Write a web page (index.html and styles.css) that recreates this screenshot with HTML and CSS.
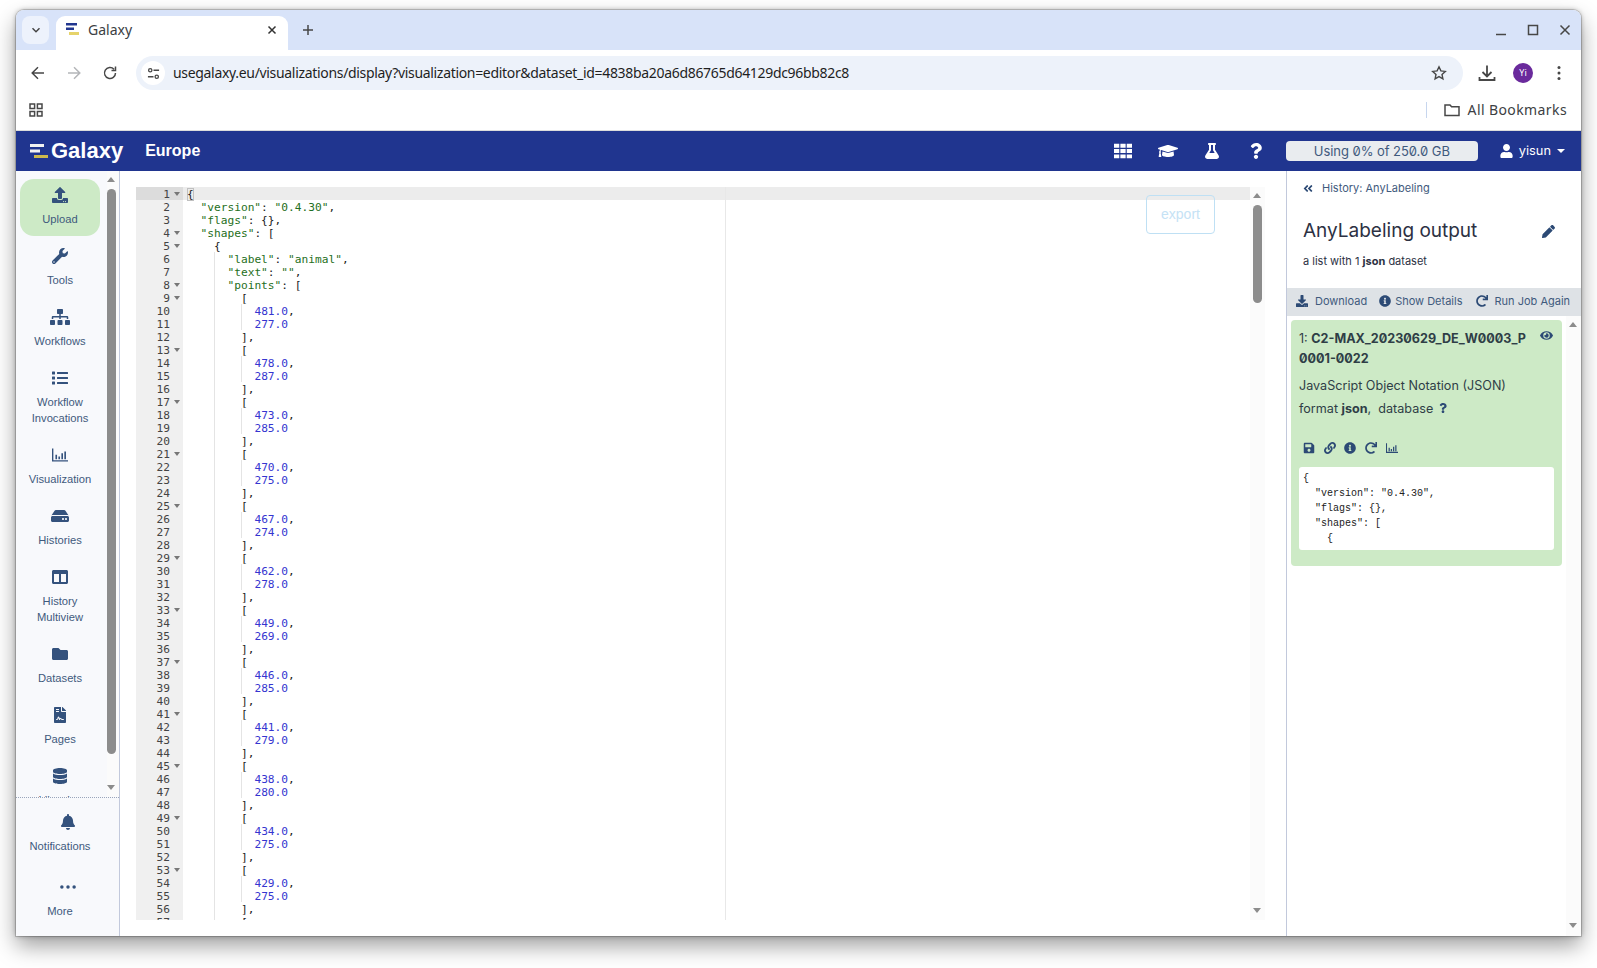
FILE: index.html
```html
<!DOCTYPE html>
<html lang="en">
<head>
<meta charset="utf-8">
<title>Galaxy</title>
<link rel="stylesheet" href="styles.css">
</head>
<body>
<svg class="defs" aria-hidden="true">
<symbol id="i-upload" viewBox="0 0 512 512"><path d="M296 384h-80c-13.3 0-24-10.7-24-24V192h-87.7c-17.8 0-26.7-21.5-14.1-34.1L242.3 5.7c7.5-7.5 19.8-7.5 27.3 0l152.2 152.2c12.6 12.6 3.7 34.1-14.1 34.1H320v168c0 13.3-10.7 24-24 24zm216-8v112c0 13.3-10.7 24-24 24H24c-13.3 0-24-10.7-24-24V376c0-13.3 10.7-24 24-24h136v8c0 30.9 25.1 56 56 56h80c30.9 0 56-25.1 56-56v-8h136c13.3 0 24 10.7 24 24zm-124 88c0-11-9-20-20-20s-20 9-20 20 9 20 20 20 20-9 20-20zm64 0c0-11-9-20-20-20s-20 9-20 20 9 20 20 20 20-9 20-20z"/></symbol>
<symbol id="i-download" viewBox="0 0 512 512"><path d="M216 0h80c13.3 0 24 10.7 24 24v168h87.7c17.8 0 26.7 21.5 14.1 34.1L269.700 378.300c-7.500 7.500-19.800 7.500-27.300 0L90.100 226.100c-12.600-12.600-3.700-34.100 14.100-34.100H192V24c0-13.300 10.700-24 24-24zm296 376v112c0 13.300-10.700 24-24 24H24c-13.300 0-24-10.700-24-24V376c0-13.300 10.700-24 24-24h146.700l49 49c20.100 20.100 52.500 20.100 72.600 0l49-49H488c13.300 0 24 10.700 24 24zm-124 88c0-11-9-20-20-20s-20 9-20 20 9 20 20 20 20-9 20-20zm64 0c0-11-9-20-20-20s-20 9-20 20 9 20 20 20 20-9 20-20z"/></symbol>
<symbol id="i-wrench" viewBox="0 0 512 512"><path d="M507.73 109.1c-2.24-9.03-13.54-12.09-20.12-5.51l-74.36 74.36-67.88-11.31-11.31-67.88 74.36-74.36c6.62-6.62 3.43-17.9-5.66-20.16-47.38-11.74-99.55.91-136.58 37.93-39.64 39.64-50.55 97.1-34.05 147.2L18.74 402.76c-24.99 24.99-24.99 65.51 0 90.5 24.99 24.99 65.51 24.99 90.5 0l213.21-213.21c50.12 16.71 107.47 5.68 147.37-34.22 37.07-37.07 49.7-89.32 37.91-136.73zM64 472c-13.25 0-24-10.75-24-24 0-13.26 10.75-24 24-24s24 10.74 24 24c0 13.25-10.75 24-24 24z"/></symbol>
<symbol id="i-sitemap" viewBox="0 0 640 512"><path d="M128 352H32c-17.67 0-32 14.33-32 32v96c0 17.67 14.33 32 32 32h96c17.67 0 32-14.33 32-32v-96c0-17.67-14.33-32-32-32zm-24-80h192v48h48v-48h192v48h48v-57.59c0-21.17-17.23-38.41-38.41-38.41H344v-64h40c17.67 0 32-14.33 32-32V32c0-17.67-14.33-32-32-32H256c-17.67 0-32 14.33-32 32v96c0 17.67 14.33 32 32 32h40v64H94.41C73.23 224 56 241.23 56 262.41V320h48v-48zm264 80h-96c-17.67 0-32 14.33-32 32v96c0 17.67 14.33 32 32 32h96c17.67 0 32-14.33 32-32v-96c0-17.67-14.33-32-32-32zm240 0h-96c-17.67 0-32 14.33-32 32v96c0 17.67 14.33 32 32 32h96c17.67 0 32-14.33 32-32v-96c0-17.67-14.33-32-32-32z"/></symbol>
<symbol id="i-list" viewBox="0 0 512 512"><path d="M80 368H16a16 16 0 0 0-16 16v64a16 16 0 0 0 16 16h64a16 16 0 0 0 16-16v-64a16 16 0 0 0-16-16zm0-320H16A16 16 0 0 0 0 64v64a16 16 0 0 0 16 16h64a16 16 0 0 0 16-16V64a16 16 0 0 0-16-16zm0 160H16a16 16 0 0 0-16 16v64a16 16 0 0 0 16 16h64a16 16 0 0 0 16-16v-64a16 16 0 0 0-16-16zm416 176H176a16 16 0 0 0-16 16v32a16 16 0 0 0 16 16h320a16 16 0 0 0 16-16v-32a16 16 0 0 0-16-16zm0-320H176a16 16 0 0 0-16 16v32a16 16 0 0 0 16 16h320a16 16 0 0 0 16-16V80a16 16 0 0 0-16-16zm0 160H176a16 16 0 0 0-16 16v32a16 16 0 0 0 16 16h320a16 16 0 0 0 16-16v-32a16 16 0 0 0-16-16z"/></symbol>
<symbol id="i-chart" viewBox="0 0 512 512"><path d="M0 48h44v372h468v44H0zM110 250h52v140h-52zM205 300h52v90h-52zM300 200h52v190h-52zM395 140h52v250h-52z"/></symbol>
<symbol id="i-hdd" viewBox="0 0 576 512"><path d="M576 304v96c0 26.51-21.49 48-48 48H48c-26.51 0-48-21.49-48-48v-96c0-26.51 21.49-48 48-48h480c26.51 0 48 21.49 48 48zm-48-80a79.557 79.557 0 0 1 30.777 6.165L462.25 85.374A48.003 48.003 0 0 0 422.311 64H153.689a48 48 0 0 0-39.938 21.374L17.223 230.165A79.557 79.557 0 0 1 48 224h480zm-48 96c-17.673 0-32 14.327-32 32s14.327 32 32 32 32-14.327 32-32-14.327-32-32-32zm-96 0c-17.673 0-32 14.327-32 32s14.327 32 32 32 32-14.327 32-32-14.327-32-32-32z"/></symbol>
<symbol id="i-columns" viewBox="0 0 512 512"><path d="M464 32H48C21.49 32 0 53.49 0 80v352c0 26.51 21.49 48 48 48h416c26.51 0 48-21.49 48-48V80c0-26.51-21.49-48-48-48zM224 416H64V160h160v256zm224 0H288V160h160v256z"/></symbol>
<symbol id="i-folder" viewBox="0 0 512 512"><path d="M464 128H272l-64-64H48C21.49 64 0 85.49 0 112v288c0 26.51 21.49 48 48 48h416c26.51 0 48-21.49 48-48V176c0-26.51-21.49-48-48-48z"/></symbol>
<symbol id="i-file" viewBox="0 0 384 512"><path d="M224 136V0H24C10.7 0 0 10.7 0 24v464c0 13.3 10.7 24 24 24h336c13.3 0 24-10.7 24-24V160H248c-13.2 0-24-10.8-24-24zM64 72c0-4.42 3.58-8 8-8h80c4.42 0 8 3.58 8 8v16c0 4.42-3.58 8-8 8H72c-4.42 0-8-3.58-8-8V72zm0 64c0-4.42 3.58-8 8-8h80c4.42 0 8 3.58 8 8v16c0 4.42-3.58 8-8 8H72c-4.42 0-8-3.58-8-8v-16zm192.81 248H304c8.84 0 16 7.16 16 16s-7.16 16-16 16h-47.19c-16.45 0-31.27-9.14-38.64-23.86-2.95-5.92-8.09-6.52-10.17-6.52s-7.22.59-10.02 6.19l-7.67 15.34a15.986 15.986 0 0 1-14.31 8.84c-.38 0-.75-.02-1.14-.05-6.45-.45-12-4.75-14.03-10.89L144 354.59l-10.61 31.88c-5.89 17.66-22.38 29.53-41 29.53H80c-8.84 0-16-7.16-16-16s7.16-16 16-16h12.39c4.83 0 9.11-3.08 10.64-7.66l18.19-54.64c3.3-9.81 12.44-16.41 22.78-16.41s19.48 6.59 22.77 16.41l13.88 41.64c19.77-16.19 54.05-9.7 66 14.16 2.02 4.06 5.96 6.5 10.16 6.5zM377 105L279.1 7c-4.5-4.5-10.6-7-17-7H256v128h128v-6.1c0-6.3-2.5-12.4-7-16.9z"/></symbol>
<symbol id="i-db" viewBox="0 0 448 512"><path d="M448 73.143v45.714C448 159.143 347.667 192 224 192S0 159.143 0 118.857V73.143C0 32.857 100.333 0 224 0s224 32.857 224 73.143zM448 176v102.857C448 319.143 347.667 352 224 352S0 319.143 0 278.857V176c48.125 33.143 136.208 48.572 224 48.572S399.874 209.143 448 176zm0 160v102.857C448 479.143 347.667 512 224 512S0 479.143 0 438.857V336c48.125 33.143 136.208 48.572 224 48.572S399.874 369.143 448 336z"/></symbol>
<symbol id="i-bell" viewBox="0 0 448 512"><path d="M224 512c35.32 0 63.97-28.65 63.97-64H160.03c0 35.35 28.65 64 63.97 64zm215.39-149.71c-19.32-20.76-55.47-51.99-55.47-154.29 0-77.7-54.48-139.9-127.94-155.16V32c0-17.67-14.32-32-31.98-32s-31.98 14.33-31.98 32v20.84C118.56 68.1 64.08 130.3 64.08 208c0 102.3-36.15 133.53-55.47 154.29-6 6.45-8.66 14.16-8.61 21.71.11 16.4 12.98 32 32.1 32h383.8c19.12 0 32-15.6 32.1-32 .05-7.55-2.61-15.27-8.61-21.71z"/></symbol>
<symbol id="i-dots" viewBox="0 0 512 512"><circle cx="60" cy="256" r="56"/><circle cx="256" cy="256" r="56"/><circle cx="452" cy="256" r="56"/></symbol>
<symbol id="i-grid" viewBox="0 48 512 416"><path d="M0 48h150v112H0zM181 48h150v112H181zM362 48h150v112H362zM0 200h150v112H0zM181 200h150v112H181zM362 200h150v112H362zM0 352h150v112H0zM181 352h150v112H181zM362 352h150v112H362z"/></symbol>
<symbol id="i-cap" viewBox="0 0 640 512"><path d="M622.34 153.2L343.4 67.5c-15.2-4.67-31.6-4.67-46.79 0L17.66 153.2c-23.54 7.23-23.54 38.36 0 45.59l48.63 14.94c-10.67 13.19-17.23 29.28-17.88 46.9C38.78 266.15 32 276.11 32 288c0 10.78 5.68 19.85 13.86 25.65L20.33 428.53C18.11 438.52 25.71 448 35.94 448h56.11c10.24 0 17.84-9.48 15.62-19.47L82.14 313.65C90.32 307.85 96 298.78 96 288c0-11.57-6.47-21.25-15.66-26.87.76-15.02 8.44-28.3 20.69-36.72L296.6 284.5c9.06 2.78 26.44 6.25 46.79 0l278.95-85.7c23.55-7.24 23.55-38.36 0-45.6zM352.79 315.09c-28.53 8.76-52.84 3.92-65.59 0l-145.02-44.55L128 384c0 35.35 85.96 64 192 64s192-28.65 192-64l-14.18-113.47-145.03 44.56z"/></symbol>
<symbol id="i-flask" viewBox="0 0 448 512"><path d="M437.2 403.5L320 215V64h8c13.3 0 24-10.7 24-24V24c0-13.3-10.7-24-24-24H120c-13.3 0-24 10.7-24 24v16c0 13.3 10.7 24 24 24h8v151L10.8 403.5C-18.5 450.6 15.3 512 70.9 512h306.2c55.7 0 89.4-61.5 60.1-108.5zM137.9 320l48.2-77.6c3.7-5.2 5.8-11.6 5.8-18.4V64h64v160c0 6.9 2.2 13.2 5.8 18.4l48.2 77.6h-172z"/></symbol>
<symbol id="i-q" viewBox="0 0 384 512"><path d="M202.021 0C122.202 0 70.503 32.703 29.914 91.026c-7.363 10.58-5.093 25.086 5.178 32.874l43.138 32.709c10.373 7.865 25.132 6.026 33.253-4.148 25.049-31.381 43.63-49.449 82.757-49.449 30.764 0 68.816 19.799 68.816 49.631 0 22.552-18.617 34.134-48.993 51.164-35.423 19.86-82.299 44.576-82.299 106.405V320c0 13.255 10.745 24 24 24h72.471c13.255 0 24-10.745 24-24v-5.773c0-42.86 125.268-44.645 125.268-160.627C377.504 66.256 286.902 0 202.021 0zM192 373.459c-38.196 0-69.271 31.075-69.271 69.271 0 38.195 31.075 69.27 69.271 69.27s69.271-31.075 69.271-69.271-31.075-69.27-69.271-69.27z"/></symbol>
<symbol id="i-user" viewBox="0 0 448 512"><path d="M224 256c70.7 0 128-57.3 128-128S294.7 0 224 0 96 57.3 96 128s57.3 128 128 128zm89.6 32h-16.7c-22.2 10.2-46.9 16-72.9 16s-50.6-5.8-72.9-16h-16.7C60.2 288 0 348.2 0 422.4V464c0 26.5 21.5 48 48 48h352c26.5 0 48-21.5 48-48v-41.6c0-74.2-60.2-134.4-134.4-134.4z"/></symbol>
<symbol id="i-pencil" viewBox="0 0 512 512"><path d="M497.9 142.1l-46.1 46.1c-4.7 4.7-12.3 4.7-17 0l-111-111c-4.7-4.7-4.7-12.3 0-17l46.1-46.1c18.7-18.7 49.1-18.7 67.9 0l60.1 60.1c18.8 18.7 18.8 49.1 0 67.9zM284.2 99.8L21.6 362.4.4 483.9c-2.9 16.4 11.4 30.6 27.8 27.8l121.5-21.3 262.6-262.6c4.7-4.7 4.7-12.3 0-17l-111-111c-4.8-4.7-12.4-4.7-17.1 0z"/></symbol>
<symbol id="i-back" viewBox="0 0 448 512"><path d="M223.7 239l136-136c9.4-9.4 24.6-9.4 33.9 0l22.6 22.6c9.4 9.4 9.4 24.6 0 33.9L319.9 256l96.4 96.4c9.4 9.4 9.4 24.6 0 33.9L393.7 409c-9.4 9.4-24.6 9.4-33.9 0l-136-136c-9.5-9.4-9.5-24.6-.1-34zm-192 34l136 136c9.4 9.4 24.6 9.4 33.9 0l22.6-22.6c9.4-9.4 9.4-24.6 0-33.9L127.9 256l96.4-96.4c9.4-9.4 9.4-24.6 0-33.9L201.7 103c-9.4-9.4-24.6-9.4-33.9 0l-136 136c-9.5 9.4-9.5 24.6-.1 34z"/></symbol>
<symbol id="i-info" viewBox="0 0 512 512"><path d="M256 8C119.043 8 8 119.083 8 256c0 136.997 111.043 248 248 248s248-111.003 248-248C504 119.083 392.957 8 256 8zm0 110c23.196 0 42 18.804 42 42s-18.804 42-42 42-42-18.804-42-42 18.804-42 42-42zm56 254c0 6.627-5.373 12-12 12h-88c-6.627 0-12-5.373-12-12v-24c0-6.627 5.373-12 12-12h12v-64h-12c-6.627 0-12-5.373-12-12v-24c0-6.627 5.373-12 12-12h64c6.627 0 12 5.373 12 12v100h12c6.627 0 12 5.373 12 12v24z"/></symbol>
<symbol id="i-redo" viewBox="0 0 512 512"><path d="M500.33 0h-47.41a12 12 0 0 0-12 12.57l4 82.76A247.42 247.42 0 0 0 256 8C119.34 8 7.9 119.53 8 256.19 8.1 393.07 119.1 504 256 504a247.1 247.1 0 0 0 166.18-63.91 12 12 0 0 0 .48-17.43l-34-34a12 12 0 0 0-16.38-.55A176 176 0 1 1 402.1 157.8l-101.53-4.87a12 12 0 0 0-12.57 12v47.41a12 12 0 0 0 12 12h200.33a12 12 0 0 0 12-12V12a12 12 0 0 0-12-12z"/></symbol>
<symbol id="i-eye" viewBox="0 0 576 512"><path d="M572.52 241.4C518.29 135.59 410.93 64 288 64S57.68 135.64 3.48 241.41a32.35 32.35 0 0 0 0 29.19C57.71 376.41 165.07 448 288 448s230.32-71.64 284.52-177.41a32.35 32.35 0 0 0 0-29.19zM288 400a144 144 0 1 1 144-144 143.93 143.93 0 0 1-144 144zm0-240a95.31 95.31 0 0 0-25.31 3.79 47.85 47.85 0 0 1-66.9 66.9A95.78 95.78 0 1 0 288 160z"/></symbol>
<symbol id="i-save" viewBox="0 0 448 512"><path d="M433.941 129.941l-83.882-83.882A48 48 0 0 0 316.118 32H48C21.49 32 0 53.49 0 80v352c0 26.51 21.49 48 48 48h352c26.51 0 48-21.49 48-48V163.882a48 48 0 0 0-14.059-33.941zM224 416c-35.346 0-64-28.654-64-64 0-35.346 28.654-64 64-64s64 28.654 64 64c0 35.346-28.654 64-64 64zm96-304.52V212c0 6.627-5.373 12-12 12H76c-6.627 0-12-5.373-12-12V108c0-6.627 5.373-12 12-12h228.52c3.183 0 6.235 1.264 8.485 3.515l3.48 3.48A11.996 11.996 0 0 1 320 111.48z"/></symbol>
<symbol id="i-link" viewBox="0 0 512 512"><path d="M326.612 185.391c59.747 59.809 58.927 155.698.36 214.59-.11.12-.24.25-.36.37l-67.2 67.2c-59.27 59.27-155.699 59.262-214.96 0-59.27-59.26-59.27-155.7 0-214.96l37.106-37.106c9.84-9.84 26.786-3.3 27.294 10.606.648 17.722 3.826 35.527 9.69 52.721 1.986 5.822.567 12.262-3.783 16.612l-13.087 13.087c-28.026 28.026-28.905 73.66-1.155 101.96 28.024 28.579 74.086 28.749 102.325.51l67.2-67.19c28.191-28.191 28.073-73.757 0-101.83-3.701-3.694-7.429-6.564-10.341-8.569a16.037 16.037 0 0 1-6.947-12.606c-.396-10.567 3.348-21.456 11.698-29.806l21.054-21.055c5.521-5.521 14.182-6.199 20.584-1.731a152.482 152.482 0 0 1 20.522 17.197zM467.547 44.449c-59.261-59.262-155.69-59.27-214.96 0l-67.2 67.2c-.12.12-.25.25-.36.37-58.566 58.892-59.387 154.781.36 214.59a152.454 152.454 0 0 0 20.521 17.196c6.402 4.468 15.064 3.789 20.584-1.731l21.054-21.055c8.35-8.35 12.094-19.239 11.698-29.806a16.037 16.037 0 0 0-6.947-12.606c-2.912-2.005-6.64-4.875-10.341-8.569-28.073-28.073-28.191-73.639 0-101.83l67.2-67.19c28.239-28.239 74.3-28.069 102.325.51 27.75 28.3 26.872 73.934-1.155 101.96l-13.087 13.087c-4.35 4.35-5.769 10.79-3.783 16.612 5.864 17.194 9.042 34.999 9.69 52.721.509 13.906 17.454 20.446 27.294 10.606l37.106-37.106c59.271-59.259 59.271-155.699.001-214.959z"/></symbol>
<symbol id="i-logo" viewBox="0 0 18 16"><path class="l1" d="M0 1h14v3H0zM0 6.500h10v3H0z"/><path class="l2" d="M4 12h14v3H4z"/></symbol>
</svg>

<div class="window">
  <div class="tabstrip">
    <div class="tabsearch"><svg class="c-ic s10" viewBox="0 0 10 10"><path d="M1.500 3.200 5 6.700l3.500-3.500"/></svg></div>
    <div class="tab">
      <svg class="tab-logo" viewBox="0 0 16 16"><path fill="#21368f" d="M1 1h11v2.400H1zM1 5.500h8v2.400H1z"/><path fill="#e6d36a" d="M4 10h10v3H4z"/></svg>
      <span class="tab-title">Galaxy</span>
      <svg class="c-ic s10 tab-x" viewBox="0 0 10 10"><path d="m1.500 1.500 7 7m0-7-7 7"/></svg>
    </div>
    <svg class="c-ic s12 newtab" viewBox="0 0 12 12"><path d="M6 1v10M1 6h10"/></svg>
    <div class="winctl">
      <svg class="c-ic s12" viewBox="0 0 12 12"><path d="M1 10.500h10"/></svg>
      <svg class="c-ic s12" viewBox="0 0 12 12"><path d="M1.500 1.500h9v9h-9z"/></svg>
      <svg class="c-ic s12" viewBox="0 0 12 12"><path d="m1.500 1.500 9 9m0-9-9 9"/></svg>
    </div>
  </div>
  <div class="toolbar">
    <svg class="c-ic s16 nav" viewBox="0 0 16 16"><path d="M14 8H2.500M8 2.200 2.200 8 8 13.800"/></svg>
    <svg class="c-ic s16 nav off" viewBox="0 0 16 16"><path d="M2 8h11.500M8 2.200 13.800 8 8 13.800"/></svg>
    <svg class="c-ic s16 nav" viewBox="0 0 16 16"><path d="M13.500 8A5.500 5.500 0 1 1 12 4.200M13.500 1.500v4h-4"/></svg>
    <div class="omnibox">
      <span class="siteinfo"><svg class="c-ic s14" viewBox="0 0 14 14"><circle cx="3.500" cy="3.500" r="1.800"/><circle cx="10.500" cy="10.500" r="1.800"/><path d="M7 3.500h6M1 10.500h6"/></svg></span>
      <span class="url">usegalaxy.eu/visualizations/display?visualization=editor&amp;dataset_id=4838ba20a6d86765d64129dc96bb82c8</span>
      <svg class="c-ic s16 star" viewBox="0 0 16 16"><path d="m8 1.800 1.900 4.100 4.400.5-3.300 3 .9 4.400L8 11.600l-3.900 2.200.9-4.400-3.300-3 4.400-.5z"/></svg>
    </div>
    <svg class="c-ic s18 dl" viewBox="0 0 18 18"><path d="M9 1.500v11M4.500 8 9 12.500 13.500 8M1.500 13v3h15v-3"/></svg>
    <span class="avatar">Yi</span>
    <svg class="kebab" viewBox="0 0 4 16"><circle cx="2" cy="2.500" r="1.500"/><circle cx="2" cy="8" r="1.500"/><circle cx="2" cy="13.500" r="1.500"/></svg>
  </div>
  <div class="bookmarks">
    <svg class="c-ic s14" viewBox="0 0 14 14"><path d="M1 1h4.600v4.600H1zM8.400 1H13v4.600H8.400zM1 8.400h4.600V13H1zM8.400 8.400H13V13H8.400z"/></svg>
    <span class="bm-sep"></span>
    <svg class="c-ic s16" viewBox="0 0 16 16"><path d="M1 3h5l1.600 1.800H15v8.700H1z"/></svg>
    <span class="bm-text">All Bookmarks</span>
  </div>

  <div class="navbar">
    <svg class="brand-logo"><use href="#i-logo"/></svg>
    <span class="brand">Galaxy</span>
    <span class="brand-sub">Europe</span>
    <div class="nav-right">
      <svg class="nav-ic"><use href="#i-grid"/></svg>
      <svg class="nav-ic cap"><use href="#i-cap"/></svg>
      <svg class="nav-ic"><use href="#i-flask"/></svg>
      <svg class="nav-ic"><use href="#i-q"/></svg>
      <span class="quota">Using 0% of 250.0 GB</span>
      <span class="usermenu"><svg class="user-ic"><use href="#i-user"/></svg>yisun<i class="caret"></i></span>
    </div>
  </div>

  <div class="app">
    <aside class="sidebar">
      <div class="side-top">
        <div class="side-list">
          <a class="item active"><svg class="ic"><use href="#i-upload"/></svg><span>Upload</span></a>
          <a class="item"><svg class="ic"><use href="#i-wrench"/></svg><span>Tools</span></a>
          <a class="item"><svg class="ic"><use href="#i-sitemap"/></svg><span>Workflows</span></a>
          <a class="item"><svg class="ic"><use href="#i-list"/></svg><span>Workflow Invocations</span></a>
          <a class="item"><svg class="ic"><use href="#i-chart"/></svg><span>Visualization</span></a>
          <a class="item"><svg class="ic"><use href="#i-hdd"/></svg><span>Histories</span></a>
          <a class="item"><svg class="ic"><use href="#i-columns"/></svg><span>History Multiview</span></a>
          <a class="item"><svg class="ic"><use href="#i-folder"/></svg><span>Datasets</span></a>
          <a class="item"><svg class="ic"><use href="#i-file"/></svg><span>Pages</span></a>
          <a class="item"><svg class="ic"><use href="#i-db"/></svg><span>Libraries</span></a>
        </div>
        <div class="vscroll side-scroll"><i class="up"></i><b class="thumb"></b><i class="down"></i></div>
      </div>
      <div class="side-bottom">
        <a class="item"><svg class="ic shifted"><use href="#i-bell"/></svg><span>Notifications</span></a>
        <a class="item more"><svg class="ic shifted"><use href="#i-dots"/></svg><span>More</span></a>
      </div>
    </aside>

    <main class="center">
      <button class="export">export</button>
      <div class="editor">
        <div class="code">
          <i class="margin"></i>
          <div class="r act"><b class="f">1</b><code><span class="cur">{</span></code></div>
          <div class="r"><b>2</b><code>  <s>"version"</s>: <s>"0.4.30"</s>,</code></div>
          <div class="r"><b>3</b><code>  <s>"flags"</s>: {},</code></div>
          <div class="r"><b class="f">4</b><code>  <s>"shapes"</s>: [</code></div>
          <div class="r"><b class="f">5</b><code>    {</code></div>
          <div class="r"><b>6</b><code>    <u>  </u><s>"label"</s>: <s>"animal"</s>,</code></div>
          <div class="r"><b>7</b><code>    <u>  </u><s>"text"</s>: <s>""</s>,</code></div>
          <div class="r"><b class="f">8</b><code>    <u>  </u><s>"points"</s>: [</code></div>
          <div class="r"><b class="f">9</b><code>    <u>    </u>[</code></div>
          <div class="r"><b>10</b><code>    <u>    </u><u>  </u><em>481.0</em>,</code></div>
          <div class="r"><b>11</b><code>    <u>    </u><u>  </u><em>277.0</em></code></div>
          <div class="r"><b>12</b><code>    <u>    </u>],</code></div>
          <div class="r"><b class="f">13</b><code>    <u>    </u>[</code></div>
          <div class="r"><b>14</b><code>    <u>    </u><u>  </u><em>478.0</em>,</code></div>
          <div class="r"><b>15</b><code>    <u>    </u><u>  </u><em>287.0</em></code></div>
          <div class="r"><b>16</b><code>    <u>    </u>],</code></div>
          <div class="r"><b class="f">17</b><code>    <u>    </u>[</code></div>
          <div class="r"><b>18</b><code>    <u>    </u><u>  </u><em>473.0</em>,</code></div>
          <div class="r"><b>19</b><code>    <u>    </u><u>  </u><em>285.0</em></code></div>
          <div class="r"><b>20</b><code>    <u>    </u>],</code></div>
          <div class="r"><b class="f">21</b><code>    <u>    </u>[</code></div>
          <div class="r"><b>22</b><code>    <u>    </u><u>  </u><em>470.0</em>,</code></div>
          <div class="r"><b>23</b><code>    <u>    </u><u>  </u><em>275.0</em></code></div>
          <div class="r"><b>24</b><code>    <u>    </u>],</code></div>
          <div class="r"><b class="f">25</b><code>    <u>    </u>[</code></div>
          <div class="r"><b>26</b><code>    <u>    </u><u>  </u><em>467.0</em>,</code></div>
          <div class="r"><b>27</b><code>    <u>    </u><u>  </u><em>274.0</em></code></div>
          <div class="r"><b>28</b><code>    <u>    </u>],</code></div>
          <div class="r"><b class="f">29</b><code>    <u>    </u>[</code></div>
          <div class="r"><b>30</b><code>    <u>    </u><u>  </u><em>462.0</em>,</code></div>
          <div class="r"><b>31</b><code>    <u>    </u><u>  </u><em>278.0</em></code></div>
          <div class="r"><b>32</b><code>    <u>    </u>],</code></div>
          <div class="r"><b class="f">33</b><code>    <u>    </u>[</code></div>
          <div class="r"><b>34</b><code>    <u>    </u><u>  </u><em>449.0</em>,</code></div>
          <div class="r"><b>35</b><code>    <u>    </u><u>  </u><em>269.0</em></code></div>
          <div class="r"><b>36</b><code>    <u>    </u>],</code></div>
          <div class="r"><b class="f">37</b><code>    <u>    </u>[</code></div>
          <div class="r"><b>38</b><code>    <u>    </u><u>  </u><em>446.0</em>,</code></div>
          <div class="r"><b>39</b><code>    <u>    </u><u>  </u><em>285.0</em></code></div>
          <div class="r"><b>40</b><code>    <u>    </u>],</code></div>
          <div class="r"><b class="f">41</b><code>    <u>    </u>[</code></div>
          <div class="r"><b>42</b><code>    <u>    </u><u>  </u><em>441.0</em>,</code></div>
          <div class="r"><b>43</b><code>    <u>    </u><u>  </u><em>279.0</em></code></div>
          <div class="r"><b>44</b><code>    <u>    </u>],</code></div>
          <div class="r"><b class="f">45</b><code>    <u>    </u>[</code></div>
          <div class="r"><b>46</b><code>    <u>    </u><u>  </u><em>438.0</em>,</code></div>
          <div class="r"><b>47</b><code>    <u>    </u><u>  </u><em>280.0</em></code></div>
          <div class="r"><b>48</b><code>    <u>    </u>],</code></div>
          <div class="r"><b class="f">49</b><code>    <u>    </u>[</code></div>
          <div class="r"><b>50</b><code>    <u>    </u><u>  </u><em>434.0</em>,</code></div>
          <div class="r"><b>51</b><code>    <u>    </u><u>  </u><em>275.0</em></code></div>
          <div class="r"><b>52</b><code>    <u>    </u>],</code></div>
          <div class="r"><b class="f">53</b><code>    <u>    </u>[</code></div>
          <div class="r"><b>54</b><code>    <u>    </u><u>  </u><em>429.0</em>,</code></div>
          <div class="r"><b>55</b><code>    <u>    </u><u>  </u><em>275.0</em></code></div>
          <div class="r"><b>56</b><code>    <u>    </u>],</code></div>
          <div class="r"><b class="f">57</b><code>    <u>    </u>[</code></div>
        </div>
        <div class="vscroll ed-scroll"><i class="up"></i><b class="thumb"></b><i class="down"></i></div>
      </div>
    </main>

    <aside class="panel">
      <div class="p-head">
        <div class="p-back"><svg class="ic-back"><use href="#i-back"/></svg>History: AnyLabeling</div>
        <div class="p-title"><span>AnyLabeling output</span><svg class="ic-pencil"><use href="#i-pencil"/></svg></div>
        <div class="p-sub">a list with 1 <strong>json</strong> dataset</div>
      </div>
      <div class="p-actions">
        <span class="act-a"><svg class="a-ic"><use href="#i-download"/></svg>Download</span>
        <span class="act-b"><svg class="a-ic"><use href="#i-info"/></svg>Show Details</span>
        <span class="act-c"><svg class="a-ic"><use href="#i-redo"/></svg>Run Job Again</span>
      </div>
      <div class="p-body">
        <div class="p-list">
          <article class="card">
            <div class="c-title"><span>1: <strong>C2-MAX_20230629_DE_W0003_P<br>0001-0022</strong></span><svg class="ic-eye"><use href="#i-eye"/></svg></div>
            <div class="c-text">JavaScript Object Notation (JSON)<br>format <strong>json</strong>,&nbsp; database <svg class="ic-qm"><use href="#i-q"/></svg></div>
            <div class="c-icons">
              <svg><use href="#i-save"/></svg>
              <svg><use href="#i-link"/></svg>
              <svg><use href="#i-info"/></svg>
              <svg><use href="#i-redo"/></svg>
              <svg><use href="#i-chart"/></svg>
            </div>
            <pre class="c-peek">{
  "version": "0.4.30",
  "flags": {},
  "shapes": [
    {</pre>
          </article>
        </div>
        <div class="vscroll p-scroll"><i class="up"></i><i class="down"></i></div>
      </div>
    </aside>
  </div>
</div>
</body>
</html>
```
FILE: styles.css
```css
* { box-sizing: border-box; }
html, body { margin: 0; height: 968px; overflow: hidden; background: #fff; }
body { padding: 10px 16px 0 16px; font-family: Inter, "Liberation Sans", sans-serif; }
.defs { width: 0; height: 0; position: absolute; }

.window { height: 926px; display: flex; flex-direction: column; overflow: hidden; border-radius: 8px 8px 0 0; background: #fff; box-shadow: 0 10px 22px rgba(0,0,0,.38), 0 0 5px rgba(0,0,0,.3), 0 0 0 1px rgba(0,0,0,.16); }

.c-ic { fill: none; stroke: #474747; stroke-width: 1.5; flex: none; }
.s10 { width: 10px; height: 10px; }
.s12 { width: 12px; height: 12px; }
.s14 { width: 14px; height: 14px; }
.s16 { width: 16px; height: 16px; }
.s18 { width: 18px; height: 18px; }

.tabstrip { height: 40px; flex: none; background: #d8e3f9; display: flex; align-items: flex-end; padding-left: 6px; position: relative; }
.tabsearch { width: 27px; height: 28px; margin-bottom: 6px; border-radius: 8px; background: #edf2fc; display: flex; align-items: center; justify-content: center; }
.tab { width: 232px; height: 34px; margin-left: 7px; background: #fff; border-radius: 9px 9px 0 0; display: flex; align-items: center; padding: 0 0 6px 9px; }
.tab-logo { width: 16px; height: 16px; flex: none; }
.tab-title { margin-left: 7px; font: 14px/20px "Noto Sans", sans-serif; color: #3c4043; flex: 1; }
.tab-x { margin-right: 11px; stroke: #333; }
.newtab { margin: 0 0 14px 14px; }
.winctl { margin-left: auto; margin-bottom: 14px; display: flex; gap: 20px; padding-right: 10px; }

.toolbar { height: 40px; flex: none; padding-top: 6px; display: flex; align-items: center; background: #fff; padding-left: 14px; }
.nav { margin-right: 20px; }
.nav.off { stroke: #b4b6b9; }
.omnibox { width: 1327px; height: 34px; margin-left: -2px; border-radius: 17px; background: #edf2fa; display: flex; align-items: center; padding-left: 5px; padding-right: 16px; }
.siteinfo { width: 24px; height: 24px; border-radius: 50%; background: #fff; display: flex; align-items: center; justify-content: center; flex: none; }
.siteinfo .c-ic { stroke-width: 1.4; width: 13px; height: 13px; }
.url { margin-left: 8px; font: 14px/20px "Noto Sans", sans-serif; color: #1f1f1f; white-space: nowrap; flex: 1; letter-spacing: -.32px; }
.star { stroke-width: 1.4; }
.dl { margin-left: 15px; stroke-width: 1.8; }
.avatar { width: 20px; height: 20px; margin-left: 17px; border-radius: 50%; background: #6a2a9c; color: #fff; font: 9px/20px "Noto Sans", sans-serif; text-align: center; flex: none; }
.kebab { width: 4px; height: 16px; margin-left: 24px; fill: #474747; flex: none; }

.bookmarks { height: 41px; flex: none; display: flex; align-items: center; padding: 0 14px 0 13px; background: #fff; border-bottom: 1px solid #dcdcdc; }
.bm-sep { width: 1px; height: 16px; background: #c7d6ee; margin-left: auto; margin-right: 17px; }
.bm-text { margin-left: 8px; font: 14px/20px "Noto Sans", sans-serif; color: #3c4043; letter-spacing: .4px; }

.navbar { height: 40px; flex: none; background: #20358f; display: flex; align-items: center; padding-left: 14px; color: #fff; }
.brand-logo { width: 18px; height: 16px; flex: none; }
.l1 { fill: #f2f2f2; }
.l2 { fill: #cdb94d; }
.brand { margin-left: 3px; font: 700 22px/28px "Liberation Sans", sans-serif; }
.brand-sub { margin-left: 22px; font: 700 16px/24px "Liberation Sans", sans-serif; }
.nav-right { margin-left: auto; display: flex; align-items: center; }
.nav-ic { width: 18px; height: 16px; fill: #fff; margin-right: 26px; flex: none; }
.nav-ic.cap { width: 20px; margin-right: 25px; }
.nav-ic:nth-child(4) { margin-right: 21px; }
.quota { width: 192px; height: 20px; margin-right: 22px; border-radius: 4px; background: #e9ecef; color: #3f5a7d; font: 13px/20px Inter, sans-serif; font-feature-settings: "zero"; text-align: center; letter-spacing: -.05px; }
.usermenu { display: flex; align-items: center; font: 12.8px/20px Inter, sans-serif; padding-right: 16px; }
.user-ic { width: 13px; height: 14px; fill: #fff; margin-right: 6px; }
.caret { width: 0; height: 0; margin-left: 6px; border: 4.500px solid transparent; border-top-color: #fff; border-bottom: 0; }

.app { flex: 1; min-height: 0; display: flex; }
.ic { width: 20px; height: 16px; fill: #34527d; display: block; margin: 2px auto 0; flex: none; }
.sidebar { width: 104px; flex: none; background: #f8f9fc; border-right: 1px solid #c2c9dc; display: flex; flex-direction: column; }
.side-top { flex: 1; min-height: 0; display: flex; }
.side-list { width: 91px; flex: none; padding: 8px 0 0 4px; overflow: hidden; }
.item { display: block; width: 80px; padding: 6px 2px 9px; margin-bottom: 4px; border-radius: 14px; text-align: center; color: #3f5a7d; font: 11.2px/16px "Liberation Sans", sans-serif; }
.item span { display: block; margin-top: 8px; }
.item.active { background: #cdeac6; }
.side-bottom { height: 139px; flex: none; border-top: 1px dotted #9aa5bb; padding: 8px 0 0 4px; }
.side-bottom .item { padding-bottom: 13px; margin-bottom: 4px; }
.shifted { position: relative; left: 8px; }

.vscroll { position: relative; flex: none; background: #fbfbfb; }
.vscroll .thumb { position: absolute; background: #8c8c8c; border-radius: 5px; }
.vscroll .up, .vscroll .down { position: absolute; width: 0; height: 0; border-left: 4.500px solid transparent; border-right: 4.500px solid transparent; }
.vscroll .up { border-bottom: 5px solid #8c8c8c; }
.vscroll .down { border-top: 5px solid #8c8c8c; }
.side-scroll { width: 12px; }
.side-scroll .thumb { left: 0; width: 9px; top: 18px; height: 565px; }
.side-scroll .up { left: 0; top: 6px; }
.side-scroll .down { left: 0; top: 614px; }

.center { flex: 1; min-width: 0; position: relative; padding: 16px 21px 16px 16px; background: #fff; }
.export { position: absolute; left: 1026px; top: 24px; width: 69px; height: 39px; background: transparent; border: 1px solid #bfe0f4; border-radius: 4px; color: #c5e2f5; font: 14px/20px "Liberation Sans", sans-serif; padding: 0 0 2px; z-index: 2; }
.editor { height: 100%; display: flex; overflow: hidden; }
.code { flex: 1; min-width: 0; position: relative; overflow: hidden; font: 11.2px/15px "DejaVu Sans Mono", monospace; color: #222; }
.margin { position: absolute; left: 589px; top: 0; bottom: 0; width: 1px; background: #e8e8e8; }
.r { display: flex; height: 13px; }
.r b { width: 47px; height: 13px; flex: none; padding-right: 13px; text-align: right; font-weight: 400; color: #444; background: #f0f0f0; position: relative; }
.r b.f::after { content: ""; position: absolute; left: 38px; top: 5px; border-left: 3px solid transparent; border-right: 3px solid transparent; border-top: 4px solid #777; }
.r code { flex: 1; font: inherit; white-space: pre; padding-left: 4px; height: 13px; }
.r s { text-decoration: none; color: #1f6f22; }
.r em { font-style: normal; color: #3535d0; }
.r u { text-decoration: none; display: inline-block; height: 13px; vertical-align: top; box-shadow: inset 1px 0 0 #e4e4e4; }
.r.act b { background: #dcdcdc; }
.r.act code { background: #ececec; }
.cur { box-shadow: inset 0 0 0 1px #c0c0c0; }
.ed-scroll { width: 15px; }
.ed-scroll .thumb { left: 3px; width: 9px; top: 18px; height: 98px; }
.ed-scroll .up { left: 3px; top: 6px; }
.ed-scroll .down { left: 3px; top: 721px; }

.panel { width: 295px; flex: none; border-left: 1px solid #c2c9dc; background: #fff; display: flex; flex-direction: column; }
.p-head { height: 117px; flex: none; padding: 9px 16px 0; }
.p-back { display: flex; align-items: center; font: 11px/16px Inter, sans-serif; color: #3f5a7d; white-space: nowrap; }
.ic-back { width: 10px; height: 11px; fill: #2c4a75; margin-right: 9px; }
.p-title { margin-top: 21px; display: flex; align-items: center; justify-content: space-between; font: 19px/28px Inter, sans-serif; color: #2c3143; padding-right: 10px; }
.ic-pencil { width: 13px; height: 13px; fill: #2c4a75; }
.p-sub { margin-top: 8px; font: 11px/16px Inter, sans-serif; color: #2c3143; }
.p-actions { height: 28px; flex: none; background: #dee2e6; display: flex; align-items: center; padding: 0 0 2px 9px; font: 11px/16px Inter, sans-serif; color: #3f5a7d; white-space: nowrap; }
.p-actions span { display: flex; align-items: center; }
.a-ic { width: 12px; height: 12px; fill: #2c4a75; margin-right: 7px; }
.act-b { margin-left: 12px; }
.act-b .a-ic { margin-right: 4px; }
.act-c { margin-left: 13px; }
.p-body { flex: 1; min-height: 0; display: flex; }
.p-list { flex: 1; min-width: 0; padding: 4px 4px; }
.card { background: #cdeac6; border-radius: 4px; padding: 9px 8px 16px; color: #2f3e46; }
.c-title { display: flex; justify-content: space-between; font: 12.6px/20px Inter, sans-serif; font-feature-settings: "zero"; white-space: nowrap; }
.c-title strong { font-weight: 700; }
.ic-eye { width: 13px; height: 13px; fill: #2c4a75; margin-top: 0; margin-right: 1px; flex: none; }
.c-text { margin-top: 5px; font: 12.6px/23px Inter, sans-serif; }
.ic-qm { width: 8px; height: 10px; fill: #2c4a75; margin-left: 2px; }
.c-icons { margin-top: 22px; height: 14px; display: flex; gap: 8.7px; padding-left: 4px; }
.c-icons svg { width: 12px; height: 12px; fill: #2c4a75; }
.c-peek { margin: 11px 0 0; background: #fff; border-radius: 3px; padding: 4px 4px 4px; font: 10px/15px "Liberation Mono", monospace; color: #222; }
.p-scroll { width: 15px; }
.p-scroll .up { left: 3px; top: 6px; }
.p-scroll .down { left: 3px; top: 607px; }
```
